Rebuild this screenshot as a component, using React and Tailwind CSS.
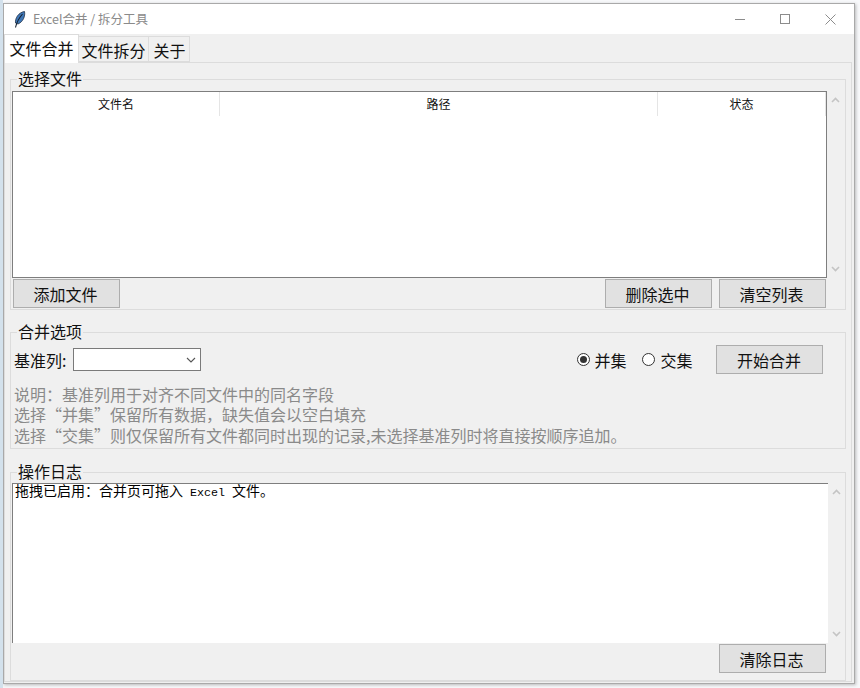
// Excel merge / split tool window, drawn as a Tk style desktop dialog.
const cjk = { fontFamily: '"Noto Sans CJK SC", "Liberation Sans", sans-serif' };

function Btn({ children, className = "" }) {
  return (
    <div className={`flex h-[29px] w-[107px] shrink-0 items-center justify-center border border-[#adadad] bg-[#e1e1e1] pr-[2px] text-[16px] leading-none text-[#111] ${className}`}>
      {children}
    </div>
  );
}

function Group({ title, className = "", children }) {
  return (
    <div className={`relative border border-[#dcdcdc] ${className}`}>
      <span className="absolute left-[6px] top-[-12px] bg-[#f0f0f0] px-[1px] text-[16px] leading-[20px] text-[#111]">{title}</span>
      {children}
    </div>
  );
}

function Chevron({ up }) {
  return (
    <svg width="9" height="6" viewBox="0 0 9 6" className="text-[#c4c4c4]">
      <path d={up ? "M1 5 L4.5 1.5 L8 5" : "M1 1 L4.5 4.5 L8 1"} fill="none" stroke="currentColor" strokeWidth="1.6" />
    </svg>
  );
}

function Radio({ checked, label, gap }) {
  return (
    <div className={`flex items-center text-[16px] leading-none text-[#111] ${gap}`}>
      <span className="flex h-[13px] w-[13px] items-center justify-center rounded-full border border-[#333] bg-white">
        {checked && <span className="h-[7px] w-[7px] rounded-full bg-[#333]" />}
      </span>
      {label}
    </div>
  );
}

function Scrollbar({ className = "" }) {
  return (
    <div className={`flex w-[17px] shrink-0 flex-col items-center justify-between py-[6px] ${className}`}>
      <Chevron up />
      <Chevron />
    </div>
  );
}

export default function App() {
  return (
    <div className="relative h-[688px] w-[860px] overflow-hidden border-l-[3px] border-[#d3e1ec] bg-[#f7f8fa] pr-[5px] pt-[3px] pb-[4px]" style={cjk}>
      {/* bits of the desktop showing beside the window */}
      <span className="absolute left-[-3px] top-[165px] h-[13px] w-[3px] bg-[#5d6f74]" />
      <span className="absolute left-[-3px] top-[516px] h-[10px] w-[3px] bg-[#5b4a60]" />
      <span className="absolute left-[-3px] top-[555px] h-[4px] w-[3px] rounded-full bg-[#6b7a80]" />

      <div className="flex h-full flex-col border border-[#a9a9a9] bg-[#f0f0f0] shadow-[1px_1px_3px_rgba(0,0,0,0.25)]">
        {/* title bar */}
        <div className="flex h-[30px] shrink-0 items-center bg-white pl-[10px]">
          <svg width="12" height="17" viewBox="0 0 12 17">
            <path d="M1.5 12 C1 7 4.5 1.5 10.5 0.5 C11.5 5 9 11 4 13 Z" fill="#3f78b8" stroke="#1f2f45" strokeWidth="0.8" />
            <path d="M1.5 16.5 C2.5 12 5 7 8.5 3" fill="none" stroke="#14202e" strokeWidth="1.1" />
          </svg>
          <span className="ml-[7px] text-[12.5px] leading-none text-[#8a8a8a]">Excel合并 / 拆分工具</span>
          <div className="ml-auto flex items-center">
            <div className="mr-[35px] h-[1px] w-[10px] bg-[#8c8c8c]" />
            <div className="mr-[35px] h-[10px] w-[10px] border border-[#8c8c8c]" />
            <svg width="11" height="11" viewBox="0 0 11 11" className="mr-[18px]">
              <path d="M0.5 0.5 L10.5 10.5 M10.5 0.5 L0.5 10.5" stroke="#8c8c8c" strokeWidth="1" />
            </svg>
          </div>
        </div>

        {/* tabs */}
        <div className="flex h-[28px] shrink-0 items-end">
          <div className="z-10 mb-[-1px] flex h-[29px] w-[75px] items-center justify-center border border-b-0 border-[#dcdcdc] bg-white pb-[2px] text-[16px] leading-none text-[#111]">文件合并</div>
          <div className="flex h-[26px] w-[70px] items-center justify-center border border-l-0 border-[#dcdcdc] pt-[1px] text-[16px] leading-none text-[#111]">文件拆分</div>
          <div className="flex h-[26px] w-[41px] items-center justify-center border border-l-0 border-[#dcdcdc] pl-[1px] pt-[1px] text-[16px] leading-none text-[#111]">关于</div>
        </div>

        {/* page */}
        <div className="mb-[1px] mr-[2px] flex flex-1 flex-col border border-[#dcdcdc] px-[5px] pt-[16px]">
          <Group title="选择文件" className="h-[231px] pl-[1px]">
            <div className="flex h-[198px] pt-[11px]">
              <div className="w-[815px] border border-[#7e7e7e] bg-white">
                <div className="flex h-[24px] text-[12px] leading-none text-[#111]">
                  <div className="flex w-[207px] items-center justify-center border-r border-[#e5e5e5]">文件名</div>
                  <div className="flex w-[438px] items-center justify-center border-r border-[#e5e5e5]">路径</div>
                  <div className="flex flex-1 items-center justify-center border-r border-[#e5e5e5]">状态</div>
                </div>
              </div>
              <Scrollbar />
            </div>
            <div className="mt-[1px] flex pl-[1px] pr-[19px]">
              <Btn>添加文件</Btn>
              <Btn className="ml-auto">删除选中</Btn>
              <Btn className="ml-[7px]">清空列表</Btn>
            </div>
          </Group>

          <Group title="合并选项" className="mt-[22px] h-[117px] pl-[3px]">
            <div className="flex items-center pt-[12px]">
              <span className="text-[16px] leading-none text-[#111]">基准列:</span>
              <div className="ml-[7px] flex h-[23px] w-[128px] items-center justify-end border border-[#7a7a7a] bg-white pr-[4px]">
                <svg width="10" height="6" viewBox="0 0 10 6">
                  <path d="M1 1 L5 5 L9 1" fill="none" stroke="#555" strokeWidth="1.1" />
                </svg>
              </div>
              <div className="ml-[376px] flex items-center gap-[16px]">
                <Radio checked label="并集" gap="gap-[4px]" />
                <Radio label="交集" gap="gap-[5px]" />
              </div>
              <Btn className="ml-[24px]">开始合并</Btn>
            </div>
            <div className="mt-[9.5px] text-[16px] leading-[20.5px] text-[#8a8a8a]">
              <p>{"说明\uFF1A基准列用于对齐不同文件中的同名字段"}</p>
              <p>{"选择\u201C并集\u201D保留所有数据\uFF0C缺失值会以空白填充"}</p>
              <p>{"选择\u201C交集\u201D则仅保留所有文件都同时出现的记录,未选择基准列时将直接按顺序追加。"}</p>
            </div>
          </Group>

          <Group title="操作日志" className="mt-[23px] flex-1 pl-[1px]">
            <div className="flex h-[170px] pt-[10px]">
              <div className="w-[816px] border-l border-t border-[#7e7e7e] bg-white pl-[2px] text-[14px] leading-[13px] text-black">
                {"拖拽已启用\uFF1A合并页可拖入"}<span className="text-[11.67px]" style={{ fontFamily: '"Liberation Mono", monospace', whiteSpace: "pre" }}> Excel </span>文件。
              </div>
              <Scrollbar className="w-[16px]" />
            </div>
            <div className="mt-[1px] flex justify-end pr-[19px]">
              <Btn>清除日志</Btn>
            </div>
          </Group>
        </div>
      </div>
    </div>
  );
}
